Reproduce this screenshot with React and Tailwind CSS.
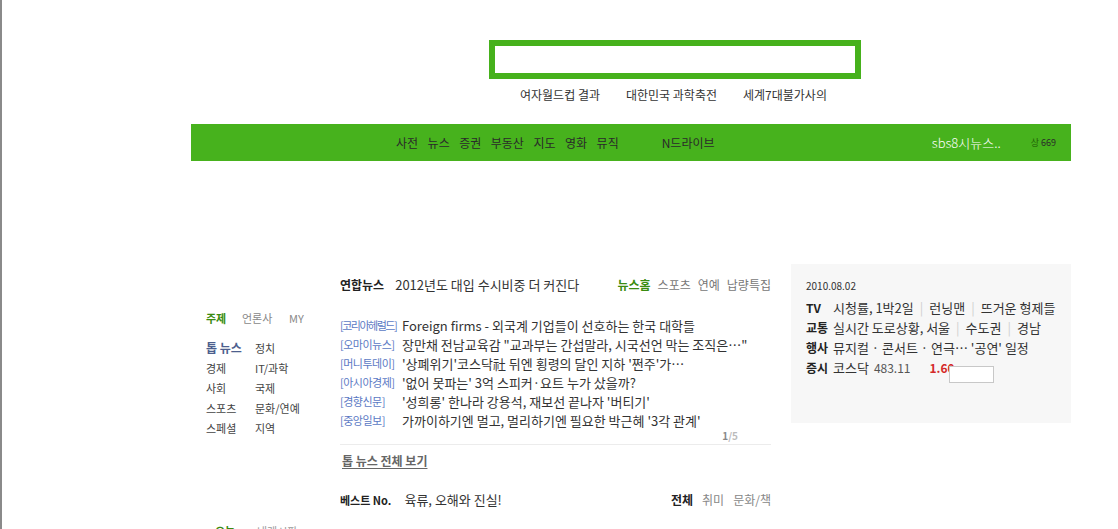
export default function App() {
  const news = [
    ["[코리아헤럴드]", "Foreign firms - 외국계 기업들이 선호하는 한국 대학들", true],
    ["[오마이뉴스]", "장만채 전남교육감 \"교과부는 간섭말라, 시국선언 막는 조직은…\""],
    ["[머니투데이]", "'상폐위기'코스닥社 뒤엔 횡령의 달인 지하 '쩐주'가…"],
    ["[아시아경제]", "'없어 못파는' 3억 스피커·요트 누가 샀을까?"],
    ["[경향신문]", "'성희롱' 한나라 강용석, 재보선 끝나자 '버티기'"],
    ["[중앙일보]", "가까이하기엔 멀고, 멀리하기엔 필요한 박근혜 '3각 관계'"],
  ];
  const sep = <span className="mx-[6px] text-[#d0d0d0]">|</span>;
  return (
    <div className="h-[529px] overflow-hidden border-l-2 border-[#8a8a8a] bg-white font-['Noto_Sans_CJK_KR',sans-serif] text-[#333]">
      <div className="ml-[189px] w-[880px]">
        <div className="pt-[40px] pl-[298px]">
          <div className="h-[39px] w-[372px] border-[6px] border-[#46b11c] bg-white" />
        </div>
        <div className="mt-[8px] flex gap-[26px] pl-[329px] text-[12px] leading-[16px] text-[#333]">
          <span>여자월드컵 결과</span>
          <span>대한민국 과학축전</span>
          <span>세계7대불가사의</span>
        </div>
        <div className="mt-[21px] flex h-[37px] items-center bg-[#47b21d] pl-[205px] pr-[15px] text-[12px] text-[#2a2a2a]">
          <div className="flex gap-[9.5px]">
            <span>사전</span>
            <span>뉴스</span>
            <span>증권</span>
            <span>부동산</span>
            <span>지도</span>
            <span>영화</span>
            <span>뮤직</span>
          </div>
          <span className="ml-[43px]">N드라이브</span>
          <span className="ml-auto text-[13px] font-light text-white">sbs8시뉴스..</span>
          <span className="ml-[30px] flex items-center gap-[2px] text-[9px]">
            <span className="text-[#1f5e05]">상</span>
            <span className="text-[#2a2a2a]">669</span>
          </span>
        </div>

        <div className="mt-[103px] flex items-start">
          {/* left sidebar */}
          <div className="w-[149px] pl-[15px] pt-[46px] text-[11px]">
            <div className="flex leading-[16px] text-[#888]">
              <span className="w-[36px] font-bold text-[#3a8c10]">주제</span>
              <span className="w-[47px]">언론사</span>
              <span>MY</span>
            </div>
            <div className="mt-[12px] grid grid-cols-[49px_auto] leading-[20px] text-[#444]">
              <span className="text-[12px] font-bold text-[#4d5f8e]">톱 뉴스</span>
              <span>정치</span>
              <span>경제</span>
              <span>IT/과학</span>
              <span>사회</span>
              <span>국제</span>
              <span>스포츠</span>
              <span>문화/연예</span>
              <span>스페셜</span>
              <span>지역</span>
            </div>
            <div className="mt-[85px] flex leading-[16px]">
              <span className="ml-[9px] w-[42px] font-bold text-[#3a8c10]">오늘</span>
              <span className="text-[#999]">내게시판</span>
            </div>
          </div>

          {/* center */}
          <div className="w-[431px] pt-[12px]">
            <div className="flex h-[18px] items-center justify-between leading-[18px]">
              <div className="flex items-center whitespace-nowrap">
                <span className="text-[12px] font-bold text-[#222]">연합뉴스</span>
                <span className="ml-[11px] text-[13px] text-[#333]">2012년도 대입 수시비중 더 커진다</span>
              </div>
              <div className="flex gap-[7px] text-[12px] text-[#777]">
                <span className="font-bold text-[#3a8c10]">뉴스홈</span>
                <span>스포츠</span>
                <span>연예</span>
                <span>납량특집</span>
              </div>
            </div>
            <ul className="mt-[22px] text-[13px] leading-[19px]">
              {news.map(([src, title, tight], i) => (
                <li key={i} className="flex whitespace-nowrap">
                  <span
                    className={
                      "w-[62px] shrink-0 text-[11px] text-[#5b79c4] " +
                      (tight ? "tracking-[-1.5px]" : "tracking-[-0.5px]")
                    }
                  >
                    {src}
                  </span>
                  <span className="text-[#333]">{title}</span>
                </li>
              ))}
            </ul>
            <div className="pr-[33px] text-right text-[10px] font-bold leading-[12px]">
              <span className="text-[#888]">1</span>
              <span className="text-[#bbb]">/5</span>
            </div>
            <div className="mt-[2px] h-px bg-[#ececec]" />
            <div className="mt-[8px] pl-[2px] text-[12px] font-bold leading-[16px] text-[#666] underline underline-offset-2">
              톱 뉴스 전체 보기
            </div>
            <div className="mt-[22px] flex h-[18px] items-center justify-between leading-[18px]">
              <div className="flex items-center whitespace-nowrap">
                <span className="text-[11px] font-bold text-[#222]">베스트 No.</span>
                <span className="ml-[13px] text-[13px] text-[#333]">육류, 오해와 진실!</span>
              </div>
              <div className="flex gap-[9px] text-[12px] text-[#888]">
                <span className="font-bold text-[#222]">전체</span>
                <span>취미</span>
                <span>문화/책</span>
              </div>
            </div>
          </div>

          {/* right panel */}
          <div className="relative ml-[20px] h-[159px] w-[280px] bg-[#f7f7f7] pl-[15px] pt-[15px]">
            <div className="text-[10px] leading-[14px] text-[#333]">2010.08.02</div>
            <div className="mt-[5px] text-[13px] leading-[20px] text-[#333]">
              <div className="flex whitespace-nowrap">
                <span className="w-[27px] shrink-0 text-[12px] font-bold text-[#222]">TV</span>
                <span>시청률, 1박2일</span>
                {sep}
                <span>런닝맨</span>
                {sep}
                <span>뜨거운 형제들</span>
              </div>
              <div className="flex whitespace-nowrap">
                <span className="w-[27px] shrink-0 text-[12px] font-bold text-[#222]">교통</span>
                <span>실시간 도로상황, 서울</span>
                {sep}
                <span>수도권</span>
                {sep}
                <span>경남</span>
              </div>
              <div className="flex whitespace-nowrap">
                <span className="w-[27px] shrink-0 text-[12px] font-bold text-[#222]">행사</span>
                <span>뮤지컬 · 콘서트 · 연극… '공연' 일정</span>
              </div>
              <div className="flex items-center whitespace-nowrap">
                <span className="w-[27px] shrink-0 text-[12px] font-bold text-[#222]">증시</span>
                <span>코스닥</span>
                <span className="ml-[5px] text-[12px] text-[#555]">483.11</span>
                <span className="ml-[19px] text-[12px] font-bold text-[#d42a2a]">1.60</span>
              </div>
            </div>
            <div className="absolute left-[158px] top-[102px] h-[17px] w-[45px] border border-[#c8c8c8] bg-white" />
          </div>
        </div>
      </div>
    </div>
  );
}
